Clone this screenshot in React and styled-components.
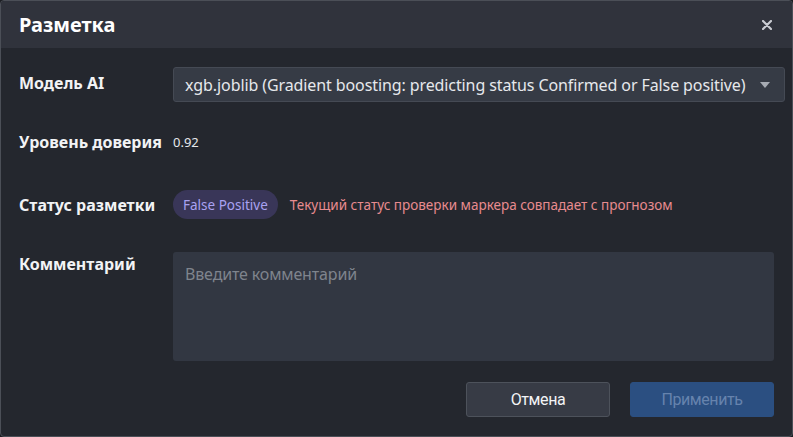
import styled, { createGlobalStyle } from "styled-components";

const GlobalStyle = createGlobalStyle`
  html, body {
    margin: 0;
    padding: 0;
    background: #1b1d22;
  }
  body {
    font-family: "Noto Sans", "Open Sans", sans-serif;
  }
`;

const Dialog = styled.div`
  width: 793px;
  height: 437px;
  box-sizing: border-box;
  display: flex;
  flex-direction: column;
  background: #24272e;
  border: 1px solid #4b4f57;
  border-radius: 4px;
  overflow: hidden;
`;

const Header = styled.div`
  height: 47px;
  flex-shrink: 0;
  display: flex;
  align-items: center;
  justify-content: space-between;
  padding: 0 15px 0 18px;
  background: #30333c;

  h2 {
    margin: 0;
    font-size: 20px;
    font-weight: 700;
    color: #ffffff;
  }
`;

const Close = styled.button`
  border: 0;
  background: none;
  padding: 0;
  width: 20px;
  height: 20px;
  display: flex;
  align-items: center;
  justify-content: center;
  color: #c9ccd2;
  cursor: pointer;
`;

const Body = styled.div`
  flex: 1;
  display: flex;
  flex-direction: column;
  padding: 19px 7px 0 18px;
`;

const Row = styled.div`
  display: grid;
  grid-template-columns: 154px 1fr;
  align-items: ${(p) => (p.$top ? "start" : "center")};
  min-height: 35px;
  margin-bottom: ${(p) => p.$gap || 0}px;
`;

const Label = styled.div`
  font-size: 16px;
  font-weight: 700;
  color: #f2f3f5;
  white-space: nowrap;
  padding-top: ${(p) => p.$pt || 0}px;
  padding-bottom: ${(p) => p.$pb || 0}px;
`;

const Select = styled.div`
  height: 35px;
  box-sizing: border-box;
  display: flex;
  align-items: center;
  justify-content: space-between;
  padding: 0 14px 0 11px;
  background: #363b45;
  border: 1px solid #454a54;
  border-radius: 3px;
  font-size: 16px;
  color: #e6e8ec;
  letter-spacing: -0.1px;
  white-space: nowrap;
`;

const Caret = styled.span`
  width: 0;
  height: 0;
  border-left: 5px solid transparent;
  border-right: 5px solid transparent;
  border-top: 6px solid #a7abb3;
`;

const Value = styled.span`
  font-size: 13px;
  color: #e6e8ec;
`;

const Status = styled.div`
  display: flex;
  align-items: center;
  gap: 12px;
`;

const Pill = styled.span`
  display: inline-flex;
  align-items: center;
  height: 29px;
  padding: 0 10px;
  border-radius: 15px;
  background: #393658;
  color: #a9a2f2;
  font-size: 13.5px;
`;

const Hint = styled.span`
  font-size: 13.5px;
  color: #e88b8f;
`;

const Comment = styled.textarea`
  width: 601px;
  height: 109px;
  box-sizing: border-box;
  resize: none;
  border: 0;
  border-radius: 3px;
  padding: 11px 12px;
  background: #323742;
  color: #e6e8ec;
  font-family: inherit;
  font-size: 16px;
  letter-spacing: -0.15px;
  outline: none;

  &::placeholder {
    color: #7f848d;
  }
`;

const Footer = styled.div`
  display: flex;
  justify-content: flex-end;
  gap: 20px;
  padding: 21px 11px 0 0;
`;

const Button = styled.button`
  width: 144px;
  height: 35px;
  border-radius: 3px;
  font-family: Roboto, "Liberation Sans", sans-serif;
  font-size: 16px;
  letter-spacing: -0.4px;
  cursor: pointer;
  border: 1px solid ${(p) => (p.$primary ? "#2b4f81" : "#4d525b")};
  background: ${(p) => (p.$primary ? "#2b4f81" : "#373b45")};
  color: ${(p) => (p.$primary ? "#6683ad" : "#f3f4f6")};
`;

export default function App() {
  return (
    <>
      <GlobalStyle />
      <Dialog>
        <Header>
          <h2>Разметка</h2>
          <Close aria-label="Закрыть">
            <svg width="10" height="10" viewBox="0 0 10 10">
              <path d="M1 1L9 9M9 1L1 9" stroke="currentColor" strokeWidth="2.2" strokeLinecap="round" />
            </svg>
          </Close>
        </Header>
        <Body>
          <Row $gap={22}>
            <Label $pb={3}>Модель AI</Label>
            <Select>
              <span>xgb.joblib (Gradient boosting: predicting status Confirmed or False positive)</span>
              <Caret />
            </Select>
          </Row>
          <Row $gap={28}>
            <Label>Уровень доверия</Label>
            <Value>0.92</Value>
          </Row>
          <Row $gap={30}>
            <Label>Статус разметки</Label>
            <Status>
              <Pill>False Positive</Pill>
              <Hint>Текущий статус проверки маркера совпадает с прогнозом</Hint>
            </Status>
          </Row>
          <Row $top>
            <Label $pt={1}>Комментарий</Label>
            <Comment placeholder="Введите комментарий" />
          </Row>
          <Footer>
            <Button>Отмена</Button>
            <Button $primary>Применить</Button>
          </Footer>
        </Body>
      </Dialog>
    </>
  );
}
